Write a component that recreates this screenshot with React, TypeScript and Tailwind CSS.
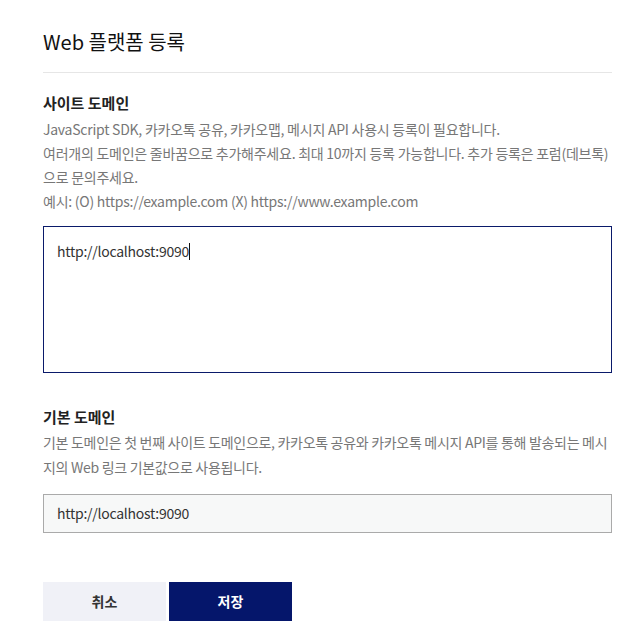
import React from 'react';

const font = { fontFamily: '"Noto Sans CJK KR", "Noto Sans", sans-serif' };

const App: React.FC = () => {
    return (
        <div className="w-[638px] h-[644px] bg-white" style={font}>
            <div className="ml-[43px] w-[569px] pt-[28px]">
                <h1 className="text-[20px] leading-[28px] text-[#111] font-normal">Web 플랫폼 등록</h1>
                <div className="mt-[16px] h-px bg-[#e6e6e6]" />

                <h2 className="mt-[19px] text-[15px] leading-[22px] font-bold text-[#222]">사이트 도메인</h2>
                <p className="mt-[3px] text-[14px] leading-[24px] tracking-[-0.25px] text-[#777]">
                    JavaScript SDK, 카카오톡 공유, 카카오맵, 메시지 API 사용시 등록이 필요합니다.<br />
                    여러개의 도메인은 줄바꿈으로 추가해주세요. 최대 10까지 등록 가능합니다. 추가 등록은 포럼(데브톡)으로 문의주세요.<br />
                    예시: (O) https://example.com (X) https://www.example.com
                </p>
                <div className="mt-[13px] h-[147px] border border-[#0a1a6a] px-[13px] pt-[12px] text-[14px] leading-[24px] tracking-[-0.25px] text-[#333]">
                    http://localhost:9090<span className="inline-block w-px h-[17px] bg-[#111] align-[-3px]" />
                </div>

                <h2 className="mt-[33px] text-[15px] leading-[22px] font-bold text-[#222]">기본 도메인</h2>
                <p className="mt-[2px] text-[14px] leading-[25px] tracking-[-0.3px] text-[#777]">
                    기본 도메인은 첫 번째 사이트 도메인으로, 카카오톡 공유와 카카오톡 메시지 API를 통해 발송되는 메시지의 Web 링크 기본값으로 사용됩니다.
                </p>
                <div className="mt-[14px] h-[39px] border border-[#aaa] bg-[#f7f8f8] px-[13px] flex items-center text-[14px] tracking-[-0.25px] text-[#333]">
                    http://localhost:9090
                </div>

                <div className="mt-[49px] flex gap-[3px]">
                    <button type="button" className="w-[123px] h-[39px] bg-[#f0f1f7] text-[14px] font-bold text-[#333]">취소</button>
                    <button type="button" className="w-[123px] h-[39px] bg-[#05166b] text-[14px] font-bold text-white">저장</button>
                </div>
            </div>
        </div>
    );
}

export default App;
